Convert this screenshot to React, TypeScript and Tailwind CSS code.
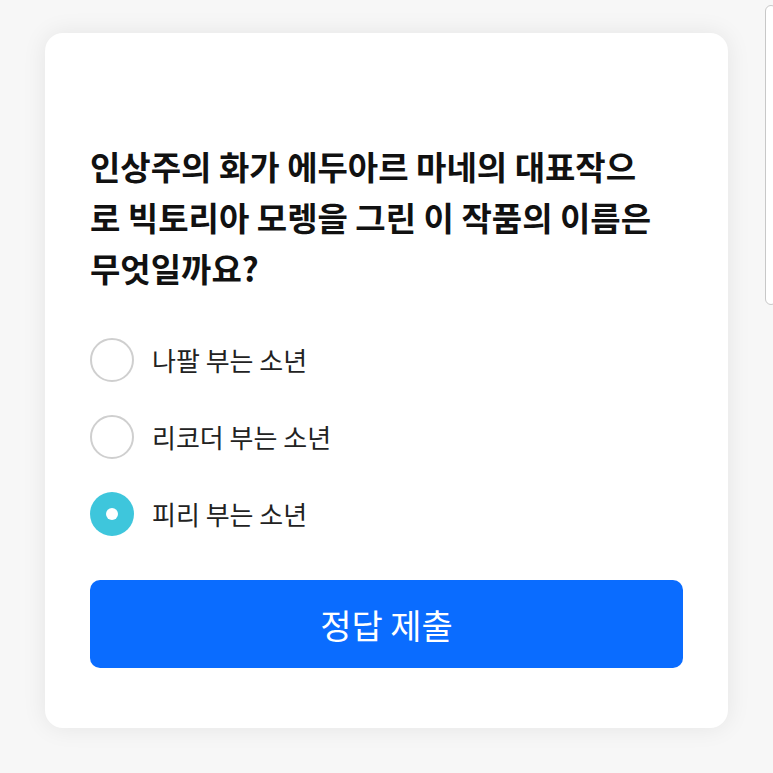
import { useState } from "react"

const options = ["나팔 부는 소년", "리코더 부는 소년", "피리 부는 소년"]

export default function App() {
  const [selected, setSelected] = useState(2)

  return (
    <div
      className="relative h-[773px] w-[773px] overflow-hidden bg-[#f7f7f7] pt-[33px] pl-[45px]"
      style={{ fontFamily: '"Noto Sans CJK KR", "Noto Sans", sans-serif' }}
    >
      <div className="absolute top-[5px] right-[-4px] h-[300px] w-[12px] rounded-[6px] border border-[#c8c8c8] bg-white" />
      <div className="flex h-[695px] w-[683px] flex-col rounded-[18px] bg-white px-[45px] pt-[108px] shadow-[0_0_24px_rgba(0,0,0,0.08)]">
        <h1 className="text-[33px] leading-[51px] font-bold text-[#111]">
          인상주의 화가 에두아르 마네의 대표작으
          <br />
          로 빅토리아 모렝을 그린 이 작품의 이름은
          <br />
          무엇일까요?
        </h1>
        <ul className="mt-[44px] flex flex-col gap-[33px]">
          {options.map((label, i) => (
            <li
              key={label}
              onClick={() => setSelected(i)}
              className="flex cursor-pointer items-center gap-[18px]"
            >
              {selected === i ? (
                <span className="flex size-[44px] items-center justify-center rounded-full bg-[#3ec6dc]">
                  <span className="size-[12px] rounded-full bg-white" />
                </span>
              ) : (
                <span className="size-[44px] rounded-full border-2 border-[#cfcfcf] bg-white" />
              )}
              <span className="text-[26px] leading-[44px] text-[#222]">{label}</span>
            </li>
          ))}
        </ul>
        <button className="mt-[44px] h-[88px] w-full rounded-[10px] bg-[#0a6cff] text-[34px] text-white">
          정답 제출
        </button>
      </div>
    </div>
  )
}
